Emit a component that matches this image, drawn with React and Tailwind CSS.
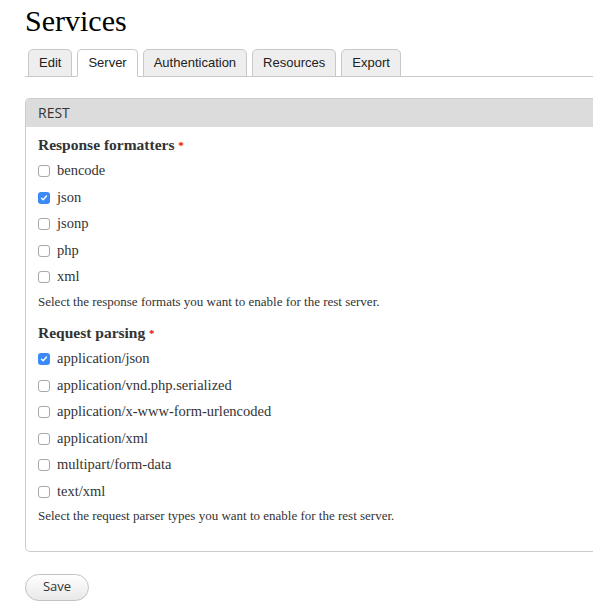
const serif = { fontFamily: '"Liberation Serif", serif' };

const tabs = ['Edit', 'Server', 'Authentication', 'Resources', 'Export'];

const formatters = [
  { label: 'bencode', checked: false },
  { label: 'json', checked: true },
  { label: 'jsonp', checked: false },
  { label: 'php', checked: false },
  { label: 'xml', checked: false },
];

const parsers = [
  { label: 'application/json', checked: true },
  { label: 'application/vnd.php.serialized', checked: false },
  { label: 'application/x-www-form-urlencoded', checked: false },
  { label: 'application/xml', checked: false },
  { label: 'multipart/form-data', checked: false },
  { label: 'text/xml', checked: false },
];

const Box = ({ checked }) =>
  checked ? (
    <span className="w-3 h-3 rounded-[3px] bg-[#3b8af6] flex items-center justify-center shrink-0">
      <svg width="8" height="8" viewBox="0 0 8 8">
        <path d="M1.5 4.2 L3.2 5.8 L6.5 2" fill="none" stroke="#fff" strokeWidth="1.4" strokeLinecap="round" strokeLinejoin="round" />
      </svg>
    </span>
  ) : (
    <span className="w-3 h-3 rounded-[3px] border border-[#a9a9a9] bg-white shrink-0" />
  );

const Group = ({ title, items, desc }) => (
  <div>
    <div className="text-[15.5px] font-bold text-[#333] h-[20px] leading-[20px]">
      {title} <span className="text-[#e00] text-[11px] align-top">*</span>
    </div>
    <div className="flex flex-col mt-[3px]">
      {items.map((it) => (
        <label key={it.label} className="flex items-center gap-[7px] h-[26.5px] text-[14.5px] text-[#333]">
          <Box checked={it.checked} />
          {it.label}
        </label>
      ))}
    </div>
    <p className="text-[13px] text-[#333] mt-[1px]">{desc}</p>
  </div>
);

export default function App() {
  return (
    <div className="min-h-screen bg-white pl-[25px] overflow-hidden" style={serif}>
      <h1 className="text-[30px] leading-[34px] pt-[4px] text-black">Services</h1>

      <div className="flex items-end gap-[5px] mt-[11px] pl-[3px] border-b border-[#c8c8c8] h-[28px]" style={{ fontFamily: '"Liberation Sans", sans-serif' }}>
        {tabs.map((t) => (
          <div
            key={t}
            className={`h-[28px] px-[10px] text-[13px] leading-[26px] border border-[#c8c8c8] rounded-t-[5px] text-[#222] -mb-px ${
              t === 'Server' ? 'bg-white border-b-white' : 'bg-[#eeeeee] border-b-[#c8c8c8]'
            }`}
          >
            {t}
          </div>
        ))}
      </div>

      <div className="mt-[21px] border border-[#cccccc] border-r-0 rounded-l-[5px] w-[600px]">
        <div className="h-[28px] bg-[#dcdcdc] rounded-tl-[4px] pl-[12px] text-[14px] leading-[28px] text-[#333]" style={{ fontFamily: '"Open Sans", sans-serif' }}>
          REST
        </div>
        <div className="pl-[12px] pt-[8px] pb-[25px] flex flex-col gap-[12px]">
          <Group title="Response formatters" items={formatters} desc="Select the response formats you want to enable for the rest server." />
          <Group title="Request parsing" items={parsers} desc="Select the request parser types you want to enable for the rest server." />
        </div>
      </div>

      <button
        className="mt-[22px] w-[64px] h-[27px] rounded-full border border-[#c2c2c2] bg-gradient-to-b from-white to-[#e8e8e8] text-[13px] text-[#333]"
        style={{ fontFamily: '"Open Sans", sans-serif' }}
      >
        Save
      </button>
    </div>
  );
}
